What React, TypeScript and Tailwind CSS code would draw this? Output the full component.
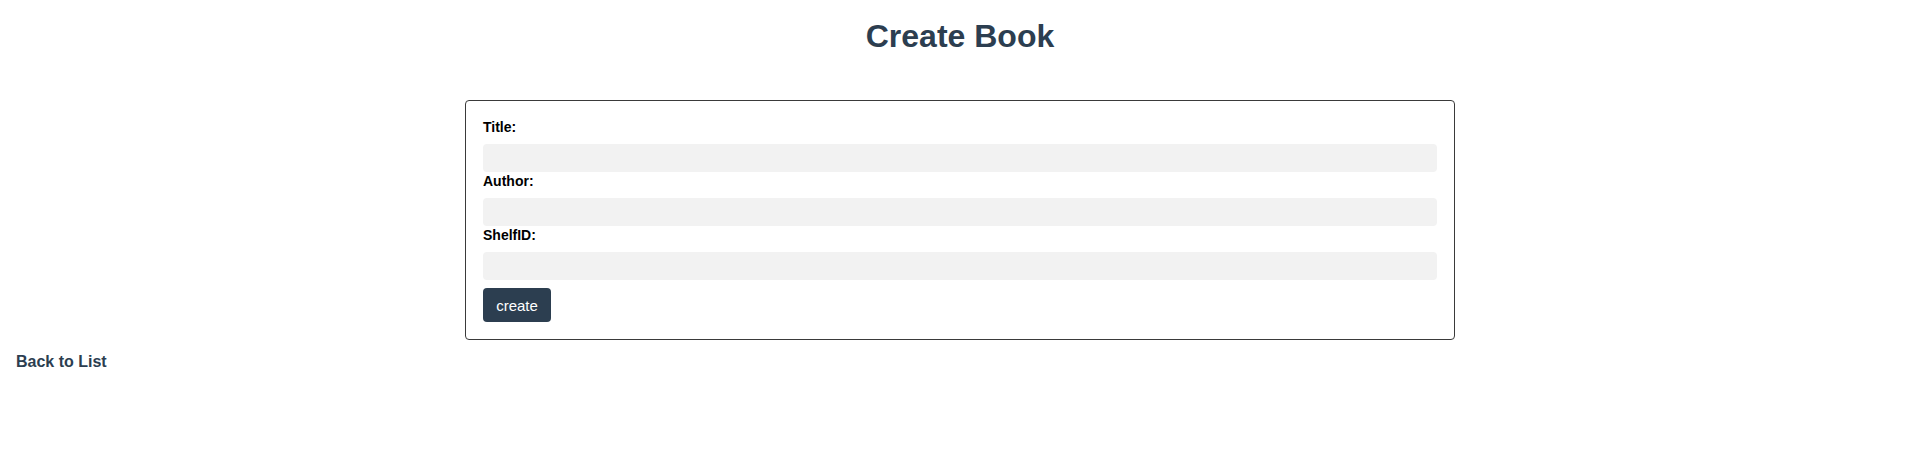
import React from "react";

export default function App() {
  const font = { fontFamily: '"Liberation Sans", Arial, sans-serif' };
  return (
    <div className="w-[1920px] h-[459px] bg-white" style={font}>
      <h1 className="mt-[18px] mb-[45px] text-center text-[32px] leading-[37px] font-bold text-[#2c3e50]">
        Create Book
      </h1>
      <form
        className="mx-auto w-[990px] border border-[#3a3a3a] rounded-[4px] px-[17px] pt-[18px] pb-[17px] flex flex-col"
        onSubmit={(e) => e.preventDefault()}
      >
        <label className="block text-[14px] leading-[16px] font-bold text-black mb-[9px]">Title:</label>
        <input className="block w-full h-[28px] bg-[#f2f2f2] rounded-[4px] outline-none border-0" />
        <label className="block mt-[1px] text-[14px] leading-[16px] font-bold text-black mb-[9px]">Author:</label>
        <input className="block w-full h-[28px] bg-[#f2f2f2] rounded-[4px] outline-none border-0" />
        <label className="block mt-[1px] text-[14px] leading-[16px] font-bold text-black mb-[9px]">ShelfID:</label>
        <input className="block w-full h-[28px] bg-[#f2f2f2] rounded-[4px] outline-none border-0" />
        <div className="mt-[8px]">
          <button
            type="submit"
            className="h-[34px] w-[68px] bg-[#2c3e50] text-white text-[15px] leading-[17px] rounded-[4px]"
          >
            create
          </button>
        </div>
      </form>
      <div className="mt-[10px] ml-[16px]">
        <a className="text-[16px] leading-[18px] font-bold text-[#2c3e50]">Back to List</a>
      </div>
    </div>
  );
}
